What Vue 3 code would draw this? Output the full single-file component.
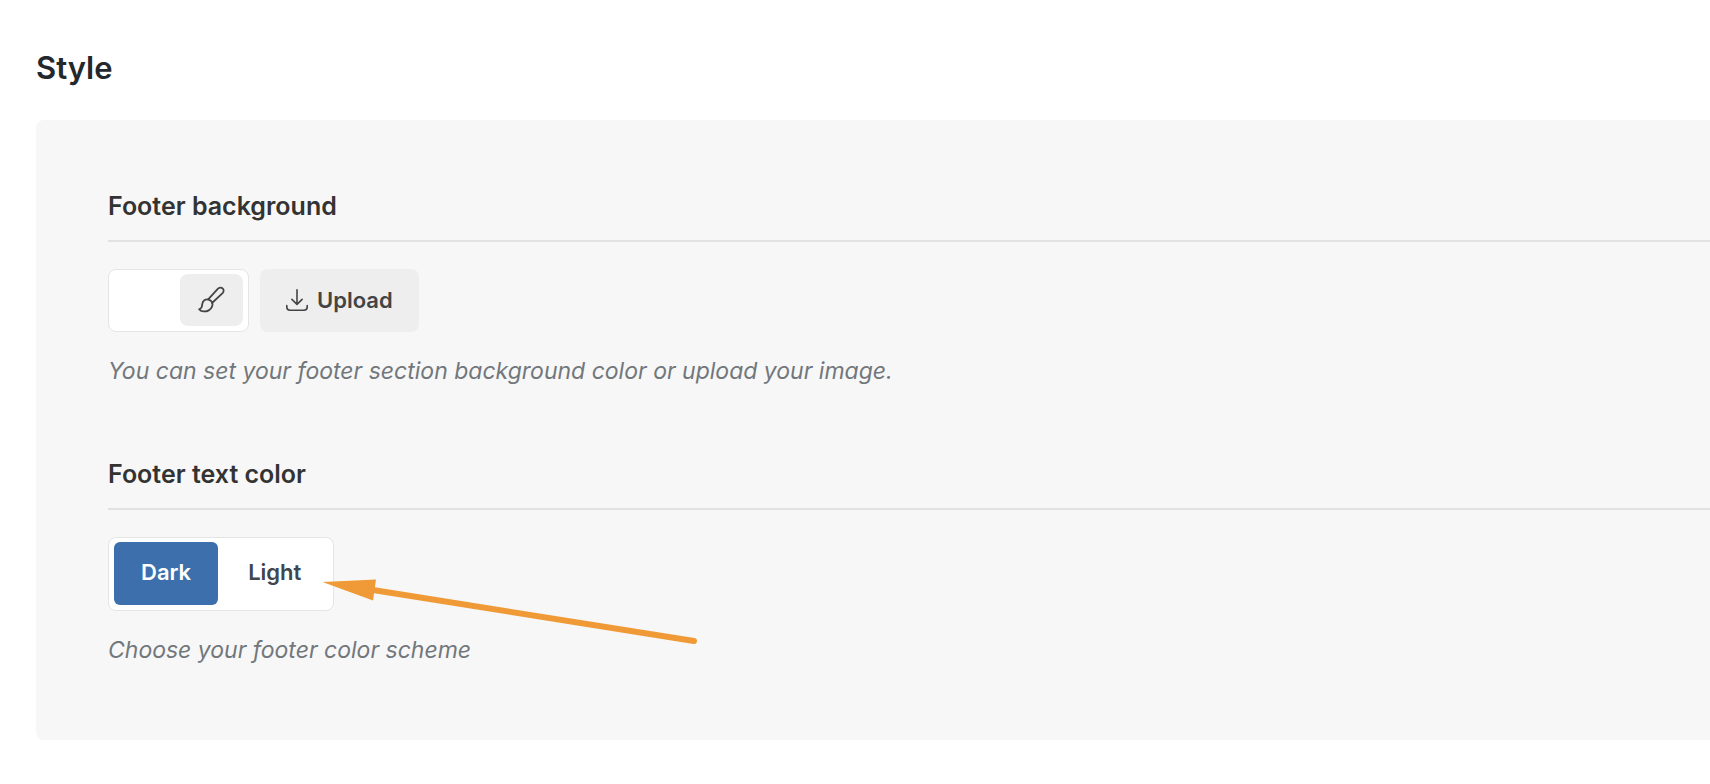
<script setup>
import { ref } from 'vue';

const background = ref('#ffffff');
const scheme = ref('dark');
const schemes = [
  { value: 'dark', label: 'Dark' },
  { value: 'light', label: 'Light' },
];

const colorInput = ref(null);
const fileInput = ref(null);

function openPicker(){
  colorInput.value.click();
}

function openUpload(){
  fileInput.value.click();
}
</script>

<template>
  <main class="page">
    <h1 class="title">Style</h1>

    <div class="panel">
      <section class="setting">
        <h2 class="heading">Footer background</h2>
        <div class="controls">
          <div class="picker">
            <input type="color" class="swatch" v-model="background" ref="colorInput" aria-label="Footer background">
            <button type="button" class="brush" aria-label="Pick color" @click="openPicker">
              <svg width="28" height="28" viewBox="0 0 28 28" fill="none" stroke="currentColor" stroke-width="1.8" stroke-linejoin="round" stroke-linecap="round">
                <path d="M10.2 13.4 L20 2.7 C21.2 1.3 23.3 1.2 24.6 2.4 C26 3.7 25.9 5.8 24.6 7.1 L14 17" />
                <path d="M13.9 15.9 C12.4 13.5 8.9 12.6 6.3 14.2 C3.7 15.9 4.5 18.6 3.7 21 C3.3 22.2 2.4 22.8 1.2 23.4 C2.6 25.7 7.7 26.1 10.7 24.4 C13.8 22.6 15.4 18.9 13.9 15.9 Z" />
              </svg>
            </button>
          </div>
          <button type="button" class="upload" @click="openUpload">
            <svg width="22" height="22" viewBox="0 0 22 22" fill="none" stroke="currentColor" stroke-width="1.6" stroke-linecap="round" stroke-linejoin="round">
              <path d="M11 0.8 V15.2 M5.9 10.4 L11 15.4 L16.1 10.4" />
              <path d="M0.8 16.6 V18 C0.8 20 2 21.2 4 21.2 H18 C20 21.2 21.2 20 21.2 18 V16.6" />
            </svg>
            Upload
          </button>
          <input type="file" class="file" ref="fileInput" accept="image/*" aria-label="Footer image">
        </div>
        <p class="hint">You can set your footer section background color or upload your image.</p>
      </section>

      <section class="setting">
        <h2 class="heading">Footer text color</h2>
        <div class="controls">
          <div class="switch" role="radiogroup" aria-label="Footer text color">
            <label v-for="item in schemes" :key="item.value" class="option" :class="{ active: scheme === item.value }">
              <input type="radio" class="radio" name="scheme" :value="item.value" v-model="scheme">
              {{ item.label }}
            </label>
          </div>
          <svg class="arrow" width="376" height="68" viewBox="0 0 376 68" aria-hidden="true">
            <path d="M0.5 5 L54 2.5 L51 23.5 Z" fill="#f09a37" />
            <path d="M51 13 L372 64" stroke="#f09a37" stroke-width="6" stroke-linecap="round" />
          </svg>
        </div>
        <p class="hint">Choose your footer color scheme</p>
      </section>
    </div>
  </main>
</template>

<style>
  body{
    margin: 0;
    background: #fff;
  }
</style>

<style scoped>
  .page{
    padding: 48px 0 44px 36px;
    font-family: Inter, "Liberation Sans", sans-serif;
    overflow: hidden;
  }
  .title{
    margin: 0 0 32px;
    font-size: 31px;
    line-height: 40px;
    font-weight: 600;
    color: #23282d;
  }
  .panel{
    display: flex;
    flex-direction: column;
    gap: 72px;
    padding: 72px 0 73px 72px;
    background: #f7f7f7;
    border-radius: 8px 0 0 8px;
  }
  .heading{
    margin: 0 0 27px;
    padding-bottom: 20px;
    border-bottom: 2px solid #e2e2e2;
    font-size: 25px;
    line-height: 28px;
    font-weight: 600;
    color: #333;
  }
  .controls{
    position: relative;
    display: flex;
    gap: 11px;
  }
  .picker{
    box-sizing: border-box;
    display: flex;
    width: 141px;
    height: 63px;
    padding: 4px 5px;
    border: 1px solid #e5e5e5;
    border-radius: 8px;
    background: #fff;
  }
  .swatch{
    flex: 1;
    min-width: 0;
    height: 100%;
    padding: 0;
    border: 0;
    background: none;
    appearance: none;
  }
  .swatch::-webkit-color-swatch-wrapper{
    padding: 0;
  }
  .swatch::-webkit-color-swatch{
    border: 0;
  }
  .brush{
    display: flex;
    align-items: center;
    justify-content: center;
    width: 63px;
    height: 52px;
    padding: 0;
    border: 0;
    border-radius: 8px;
    background: #eee;
    color: #444;
    cursor: pointer;
  }
  .upload{
    display: flex;
    align-items: center;
    gap: 9px;
    height: 63px;
    padding: 0 26px 2px;
    border: 0;
    border-radius: 8px;
    background: #eee;
    font: inherit;
    font-size: 22px;
    font-weight: 600;
    color: #444;
    cursor: pointer;
  }
  .file{
    display: none;
  }
  .hint{
    margin: 22px 0 0;
    font-size: 23px;
    line-height: 34px;
    font-style: italic;
    color: #72777c;
  }
  .switch{
    display: flex;
    gap: 3px;
    padding: 4px 5px 5px;
    border: 1px solid #e5e5e5;
    border-radius: 8px;
    background: #fff;
  }
  .option{
    padding: 0 27px 2px;
    border-radius: 6px;
    font-size: 22px;
    line-height: 61px;
    font-weight: 600;
    color: #40464d;
    cursor: pointer;
  }
  .option.active{
    background: #3c6fab;
    color: #fff;
  }
  .radio{
    position: absolute;
    opacity: 0;
    margin: 0;
  }
  .arrow{
    position: absolute;
    left: 214px;
    top: 40px;
    pointer-events: none;
  }
</style>
